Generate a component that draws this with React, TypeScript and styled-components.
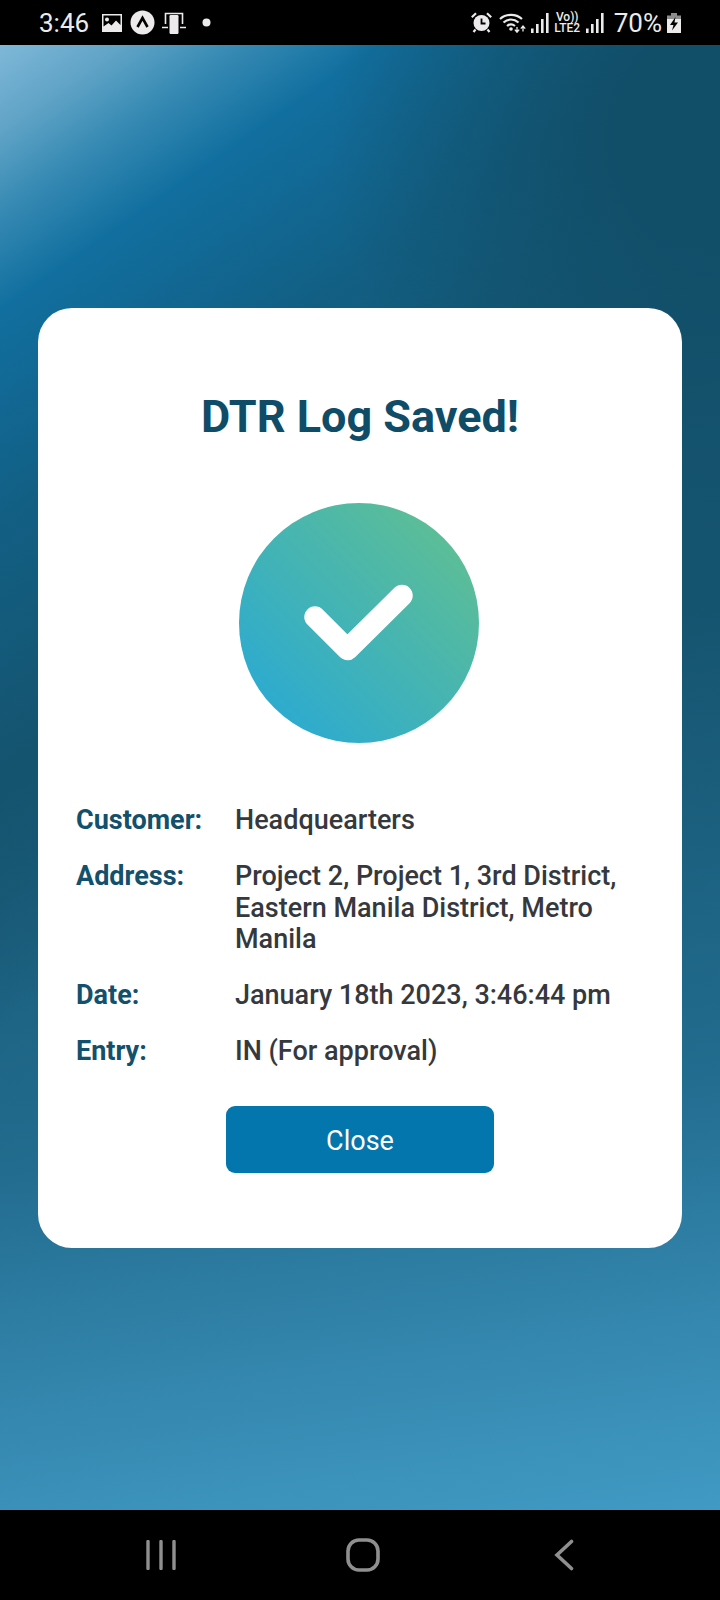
import styled, { createGlobalStyle } from "styled-components";

const GlobalStyle = createGlobalStyle`
    html, body {
        margin: 0;
        padding: 0;
        background: #000;
    }

    #root {
        height: 1600px;
    }

    * {
        box-sizing: border-box;
    }
`;

const Page = styled.div`
    width: 720px;
    height: 1600px;
    display: flex;
    flex-direction: column;
    font-family: Roboto, "Liberation Sans", sans-serif;
`;

const StatusBar = styled.div`
    height: 45px;
    flex: none;
    background: #000;
    color: #eceaea;
    display: flex;
    align-items: center;
    justify-content: space-between;
    padding: 0 39px 0 39px;
`;

const StatusGroup = styled.div`
    display: flex;
    align-items: center;
`;

const StatusText = styled.span<{ $left?: number; $right?: number }>`
    font-size: 26px;
    line-height: 30px;
    margin-left: ${(p) => p.$left ?? 0}px;
    margin-right: ${(p) => p.$right ?? 0}px;
`;

const NetworkLabel = styled.span`
    display: flex;
    flex-direction: column;
    align-items: center;
    font-size: 12px;
    font-weight: 500;
    line-height: 11px;
    width: 27px;
    margin: 0 5px 0 5px;
    white-space: nowrap;
`;

const Main = styled.main`
    flex: 1;
    display: flex;
    align-items: center;
    padding: 0 38px;
    background:
        radial-gradient(390px 400px at 100% 6%, #114e68 25%, rgba(17, 78, 104, 0) 100%),
        linear-gradient(145deg, #7fb8d8 0%, #5fa3c6 4.5%, #368ab3 8.5%, #116f9f 13.5%, #125f84 24%, #15546f 37%, rgba(21, 84, 111, 0) 50%),
        linear-gradient(172deg, #15546f 42%, #226c8f 72%, #3588b0 88%, #409ac3 100%);
`;

const Card = styled.section`
    width: 100%;
    height: 940px;
    background: #fff;
    border-radius: 34px;
    padding: 84px 38px 0;
    display: flex;
    flex-direction: column;
`;

const Title = styled.h1`
    margin: 0;
    text-align: center;
    font-size: 45px;
    line-height: 50px;
    font-weight: 700;
    color: #0f4c68;
`;

const SuccessBadge = styled.div`
    width: 240px;
    height: 240px;
    border-radius: 50%;
    margin: 61px 0 62.5px 163px;
    background: linear-gradient(45deg, #2caad0 12%, #5dbe96 88%);
    display: flex;
    align-items: center;
    justify-content: center;
`;

const Details = styled.div`
    display: flex;
    flex-direction: column;
    gap: 24.5px;
`;

const DetailRow = styled.div`
    display: flex;
    align-items: flex-start;
`;

const Label = styled.div`
    width: 159px;
    flex: none;
    font-size: 27px;
    line-height: 31.5px;
    font-weight: 700;
    color: #12506b;
`;

const Value = styled.div`
    flex: 1;
    font-size: 27px;
    line-height: 31.5px;
    font-weight: 500;
    color: #35393e;
`;

const CloseButton = styled.button`
    display: block;
    width: 268px;
    height: 67px;
    margin: 38px auto 0;
    padding: 3px 0 0;
    border: none;
    border-radius: 9px;
    background: #0276ad;
    color: #fff;
    font-family: inherit;
    font-size: 27px;
`;

const NavBar = styled.nav`
    height: 90px;
    flex: none;
    background: #000;
    display: flex;
    align-items: center;
    padding-left: 146px;
`;

const ImageIcon = styled.svg`
    margin-right: 8px;
`;

const BadgeIcon = styled.svg`
    margin-right: 7px;
`;

const CastSvg = styled.svg`
    margin-right: 16px;
`;

const AlarmSvg = styled.svg`
    margin-right: 7px;
`;

const WifiSvg = styled.svg`
    margin-right: 5px;
`;

const BatterySvg = styled.svg`
    margin-left: 5px;
`;

const HomeSvg = styled.svg`
    margin-left: 170px;
`;

const BackSvg = styled.svg`
    margin-left: 174px;
`;

const PictureIcon = () => (
    <ImageIcon width="20" height="18" viewBox="0 0 20 18">
        <path fill="#eceaea" fillRule="evenodd" d="M0 0h20v18H0zM1.5 1.5v11l5-3.5 3 2.5 4.5-5 4.5 4.5V1.5zM5 3.5a2 2 0 1 1 0 4 2 2 0 0 1 0-4z" />
    </ImageIcon>
);

const ArrowBadgeIcon = () => (
    <BadgeIcon width="25" height="25" viewBox="0 0 25 25">
        <circle cx="12.5" cy="12.5" r="12" fill="#eceaea" />
        <path d="M7.5 17l5-9 5 9" fill="none" stroke="#000" strokeWidth="2.6" />
    </BadgeIcon>
);

const CastIcon = () => (
    <CastSvg width="24" height="22" viewBox="0 0 24 22">
        <path d="M3.5 12V1.5h17V12" fill="none" stroke="#eceaea" strokeWidth="1.6" />
        <rect x="7.5" y="3" width="9" height="19" rx="1.2" fill="#eceaea" />
        <path d="M0 15.5h6M18 15.5h6" stroke="#eceaea" strokeWidth="1.6" />
    </CastSvg>
);

const AlarmIcon = () => (
    <AlarmSvg width="21" height="21" viewBox="0 0 21 21">
        <circle cx="10.5" cy="11" r="8" fill="#eceaea" />
        <path d="M10.5 6.5V11.5H14.5" fill="none" stroke="#000" strokeWidth="1.8" />
        <path d="M0.8 5.2L5 1.2M20.2 5.2L16 1.2M4.5 17.5L2.5 20M16.5 17.5L18.5 20" stroke="#eceaea" strokeWidth="2.2" />
    </AlarmSvg>
);

const WifiIcon = () => (
    <WifiSvg width="27" height="21" viewBox="0 0 27 21">
        <g fill="none" stroke="#eceaea" strokeWidth="2.2">
            <path d="M1 7C7 1.5 17 1.5 23 7" />
            <path d="M4.5 10.5C9 6.5 15 6.5 19.5 10.5" />
            <path d="M8 14C10.5 12 13.5 12 16 14" />
        </g>
        <circle cx="12" cy="17" r="1.8" fill="#eceaea" />
        <path d="M18 15v4.5M15.8 17.6l2.2 2.6 2.2-2.6M24 19.5v-5M21.8 16.6l2.2-2.6 2.2 2.6" fill="none" stroke="#eceaea" strokeWidth="1.3" />
    </WifiSvg>
);

const SignalIcon = () => (
    <svg width="18" height="20" viewBox="0 0 18 20">
        <rect x="0" y="15.5" width="2.6" height="4.5" fill="#eceaea" />
        <rect x="5" y="11" width="2.6" height="9" fill="#eceaea" />
        <rect x="10" y="6" width="2.6" height="14" fill="#eceaea" />
        <rect x="15" y="0" width="2.6" height="20" fill="#eceaea" />
    </svg>
);

const BatteryIcon = () => (
    <BatterySvg width="14" height="20" viewBox="0 0 14 20">
        <path fill="#8d8d8d" d="M4 0h6v2.5h4V8H0V2.5h4z" />
        <path fill="#eceaea" d="M0 6h14v14H0z" />
        <path fill="#000" d="M8.5 4L3 12h3.5L5 17.5l6-8H7.5z" />
    </BatterySvg>
);

const RecentsIcon = () => (
    <svg width="30" height="30" viewBox="0 0 30 30">
        <path d="M2 1.5v27M15 1.5v27M28 1.5v27" stroke="#8f8f8f" strokeWidth="3.4" strokeLinecap="round" />
    </svg>
);

const HomeIcon = () => (
    <HomeSvg width="34" height="34" viewBox="0 0 34 34">
        <rect x="2" y="2" width="30" height="30" rx="11" fill="none" stroke="#8f8f8f" strokeWidth="3.6" />
    </HomeSvg>
);

const BackIcon = () => (
    <BackSvg width="20" height="32" viewBox="0 0 20 32">
        <path d="M17.5 2.5L3 16l14.5 13.5" fill="none" stroke="#8f8f8f" strokeWidth="3.6" strokeLinecap="round" />
    </BackSvg>
);

export default function App() {
    return (
        <>
            <GlobalStyle />
            <Page>
                <StatusBar>
                    <StatusGroup>
                        <StatusText $right={13}>3:46</StatusText>
                        <PictureIcon />
                        <ArrowBadgeIcon />
                        <CastIcon />
                        <svg width="9" height="9" viewBox="0 0 9 9">
                            <circle cx="4.5" cy="4.5" r="4" fill="#eceaea" />
                        </svg>
                    </StatusGroup>
                    <StatusGroup>
                        <AlarmIcon />
                        <WifiIcon />
                        <SignalIcon />
                        <NetworkLabel>
                            <span>Vo))</span>
                            <span>LTE2</span>
                        </NetworkLabel>
                        <SignalIcon />
                        <StatusText $left={10}>70%</StatusText>
                        <BatteryIcon />
                    </StatusGroup>
                </StatusBar>
                <Main>
                    <Card>
                        <Title>DTR Log Saved!</Title>
                        <SuccessBadge>
                            <svg width="240" height="240" viewBox="0 0 240 240">
                                <path d="M76 114L108.5 146.5L163 92.5" fill="none" stroke="#fff" strokeWidth="21.5" strokeLinecap="round" strokeLinejoin="round" />
                            </svg>
                        </SuccessBadge>
                        <Details>
                            <DetailRow>
                                <Label>Customer:</Label>
                                <Value>Headquearters</Value>
                            </DetailRow>
                            <DetailRow>
                                <Label>Address:</Label>
                                <Value>Project 2, Project 1, 3rd District, Eastern Manila District, Metro Manila</Value>
                            </DetailRow>
                            <DetailRow>
                                <Label>Date:</Label>
                                <Value>January 18th 2023, 3:46:44 pm</Value>
                            </DetailRow>
                            <DetailRow>
                                <Label>Entry:</Label>
                                <Value>IN (For approval)</Value>
                            </DetailRow>
                        </Details>
                        <CloseButton>Close</CloseButton>
                    </Card>
                </Main>
                <NavBar>
                    <RecentsIcon />
                    <HomeIcon />
                    <BackIcon />
                </NavBar>
            </Page>
        </>
    );
}
